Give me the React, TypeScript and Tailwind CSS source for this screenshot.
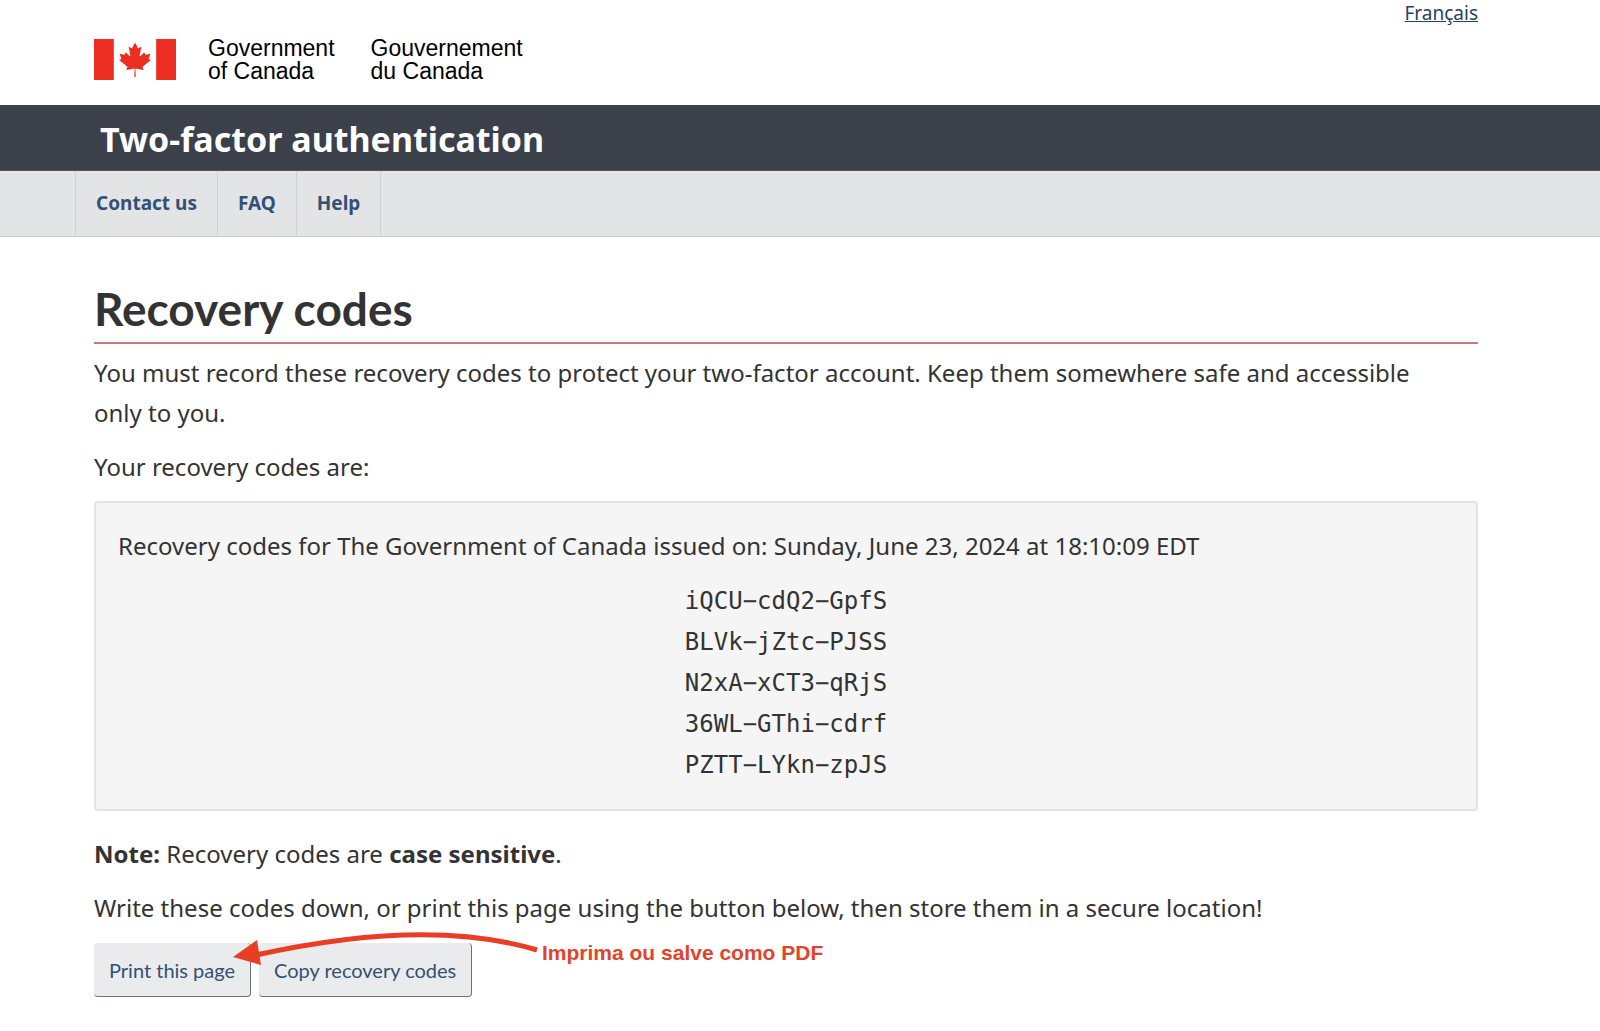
import type { ReactNode } from 'react'

const NAV_LINKS = ['Contact us', 'FAQ', 'Help']

const RECOVERY_CODES = [
  'iQCU−cdQ2−GpfS',
  'BLVk−jZtc−PJSS',
  'N2xA−xCT3−qRjS',
  '36WL−GThi−cdrf',
  'PZTT−LYkn−zpJS',
]

function CanadaFlag() {
  return (
    <svg viewBox="-4800 -2400 9600 4800" className="mt-0.5 h-[41px] w-[82px]" fill="#eb2d22" aria-hidden="true">
      <path d="M-4800-2400h2320v4800h-2320zM2480-2400h2320v4800H2480z" />
      <path d="m-90 2030 45-863a95 95 0 0 0-111-98l-859 151 116-320a65 65 0 0 0-20-73l-941-762 212-99a65 65 0 0 0 34-79l-186-572 542 115a65 65 0 0 0 73-38l105-247 423 454a65 65 0 0 0 111-57l-204-1052 327 189a65 65 0 0 0 91-27l332-652 332 652a65 65 0 0 0 91 27l327-189-204 1052a65 65 0 0 0 111 57l423-454 105 247a65 65 0 0 0 73 38l542-115-186 572a65 65 0 0 0 34 79l212 99-941 762a65 65 0 0 0-20 73l116 320-859-151a95 95 0 0 0-111 98l45 863z" />
    </svg>
  )
}

function Header() {
  return (
    <header className="flex h-[105px] items-start justify-between pl-[94px] pr-[122px]">
      <div className="flex items-start pt-[37px] font-['Liberation_Sans',sans-serif] text-[23px] leading-[23px] text-black">
        <CanadaFlag />
        <p className="ml-8">
          Government
          <br />
          of Canada
        </p>
        <p className="ml-9">
          Gouvernement
          <br />
          du Canada
        </p>
      </div>
      <a href="#fr" lang="fr" className="text-[19px] leading-[26px] text-[#284162] underline">
        Français
      </a>
    </header>
  )
}

function ActionButton({ children }: { children: ReactNode }) {
  return (
    <button
      type="button"
      className="h-[54px] rounded-[4px] border-b border-r border-[#6f7176] bg-[#eaebed] px-[15px] font-[Lato,sans-serif] text-[20px] text-[#335075]"
    >
      {children}
    </button>
  )
}

// Red pointer with its caption, drawn over the button row
function PrintHint() {
  return (
    <div className="pointer-events-none absolute -top-3.5 left-[138px] flex items-start">
      <svg viewBox="0 0 306 40" className="h-[40px] w-[306px]" aria-hidden="true">
        <path d="M24 26Q196-12 305 21" fill="none" stroke="#e83e25" strokeWidth="5" />
        <path d="M1 28 25 11 29 36z" fill="#e83e25" />
      </svg>
      <span className="mt-2.5 ml-1 whitespace-nowrap font-['Liberation_Sans',sans-serif] text-[21px] font-bold leading-7 text-[#e0452c]">
        Imprima ou salve como PDF
      </span>
    </div>
  )
}

export default function App() {
  return (
    <div className="min-h-screen bg-white font-['Noto_Sans',sans-serif] text-[#333]">
      <Header />

      <div className="border-b border-[#555463] bg-[#3b404b] pt-2.5 pb-1.5 pl-[100px]">
        <p className="text-[34px] font-bold leading-[49px] text-white">Two-factor authentication</p>
      </div>

      <nav className="flex border-b border-[#cfd1d5] bg-[#e2e4e6] pl-[75px]">
        <ul className="flex border-l border-[#cfd1d5]">
          {NAV_LINKS.map((label) => (
            <li key={label} className="border-r border-[#cfd1d5]">
              <a href="#nav" className="block px-5 text-[19px] font-bold leading-[65px] text-[#335075]">
                {label}
              </a>
            </li>
          ))}
        </ul>
      </nav>

      <main className="pl-[94px] pr-[122px] pt-11 text-[24px] leading-10">
        <h1 className="border-b-2 border-[#bf7b7f] pb-[5px] font-[Lato,sans-serif] text-[46px] font-bold leading-[56px]">
          Recovery codes
        </h1>
        <p className="mt-[9px]">
          You must record these recovery codes to protect your two-factor account. Keep them somewhere safe and
          accessible
          <br />
          only to you.
        </p>
        <p className="mt-3.5">Your recovery codes are:</p>

        <section className="mt-3.5 rounded-[4px] border-2 border-[#e3e3e3] bg-[#f5f5f5] px-[22px] py-[23px]">
          <p>Recovery codes for The Government of Canada issued on: Sunday, June 23, 2024 at 18:10:09 EDT</p>
          <ul className="mt-[15px] text-center font-['DejaVu_Sans_Mono',monospace] leading-[41px]">
            {RECOVERY_CODES.map((code) => (
              <li key={code}>{code}</li>
            ))}
          </ul>
        </section>

        <p className="mt-[23px]">
          <strong>Note:</strong> Recovery codes are <strong>case sensitive</strong>.
        </p>
        <p className="mt-3.5">
          Write these codes down, or print this page using the button below, then store them in a secure location!
        </p>

        <div className="relative mt-[15px] flex gap-2">
          <ActionButton>Print this page</ActionButton>
          <ActionButton>Copy recovery codes</ActionButton>
          <PrintHint />
        </div>
      </main>
    </div>
  )
}
